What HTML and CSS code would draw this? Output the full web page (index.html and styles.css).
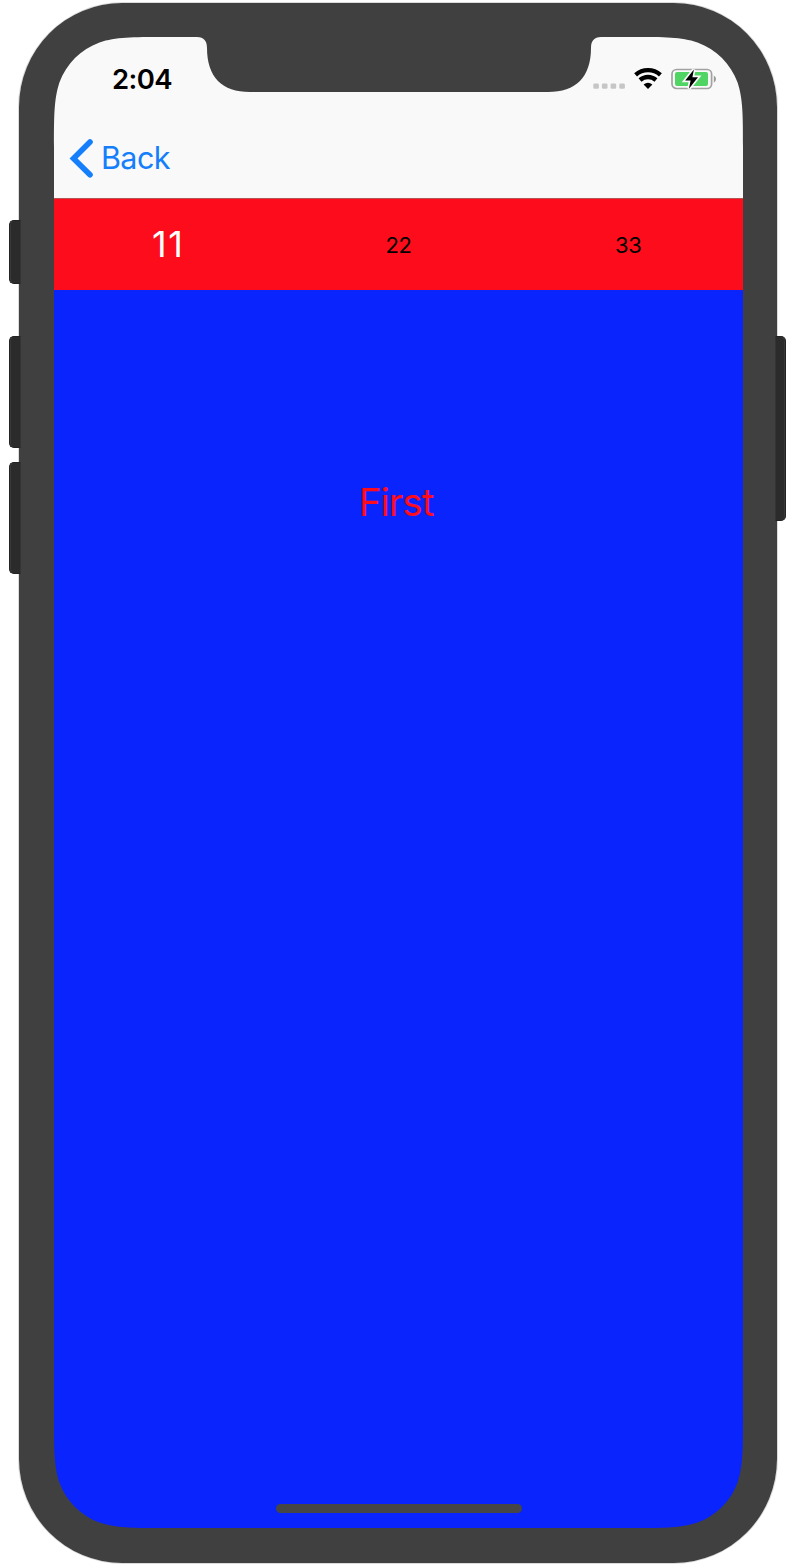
FILE: index.html
```
<!DOCTYPE html>
<html lang="en">
<head>
<meta charset="utf-8">
<title>First</title>
<link rel="stylesheet" href="styles.css">
</head>
<body>
<div class="device">
  <span class="side-button mute"></span>
  <span class="side-button volume-up"></span>
  <span class="side-button volume-down"></span>
  <span class="side-button power"></span>
  <main class="screen">
    <header class="header">
      <div class="status-bar">
        <time class="clock">2:04</time>
        <div class="indicators">
          <svg class="signal" width="32" height="6" viewBox="0 0 32 6" fill="#c6c6c6"><rect x="0.3" y="0.4" width="5.6" height="5.4" rx="1.3"/><rect x="8.9" y="0.4" width="5.6" height="5.4" rx="1.3"/><rect x="17.6" y="0.4" width="5.6" height="5.4" rx="1.3"/><rect x="26.3" y="0.4" width="5.6" height="5.4" rx="1.3"/></svg>
          <svg class="wifi" width="28" height="22" viewBox="0 0 28 22"><g fill="none" stroke="#000" stroke-width="4.4"><path d="M1.6 7.8C8.6 1.6 19.4 1.6 26.4 7.8"/><path d="M6 13C10.800 9 17.200 9 22 13"/></g><path d="M9.600 17.600q4.400-3.900 8.800 0L14 22z"/></svg>
          <svg class="battery" width="46" height="22" viewBox="0 0 46 22"><rect x="1" y="1.500" width="39.600" height="19" rx="4.500" fill="none" stroke="#a2a2a2" stroke-width="1.700"/><path d="M42.800 7.400q2.200 1.100 2.200 3.700t-2.200 3.700z" fill="#999"/><rect x="4" y="4" width="33" height="14" rx="2" fill="#50d565"/><path d="M22.900 1.600L14.200 12.500h5.400L17.900 20.700 27 9.300h-5.600z" fill="#000" stroke="#f9f9f9" stroke-width="3.400" paint-order="stroke"/></svg>
        </div>
      </div>
      <nav class="nav-bar">
        <a class="back"><svg width="24" height="40" viewBox="0 0 24 40"><path d="M21 4L4.500 20.400l16.500 16.400" fill="none" stroke="#157efb" stroke-width="5.600" stroke-linecap="round"/></svg><span class="back-label">Back</span></a>
      </nav>
    </header>
    <div class="tabs">
      <span class="tab selected">11</span>
      <span class="tab">22</span>
      <span class="tab">33</span>
    </div>
    <section class="page">
      <h1 class="page-title">First</h1>
      <span class="home-indicator"></span>
    </section>
  </main>
  <svg class="bezel" viewBox="19 3 758 1560">
    <path fill="#404040" fill-rule="evenodd" d="M122 3H674A103 104 0 0 1 777 107V1459A103 104 0 0 1 674 1563H122A103 104 0 0 1 19 1459V107A103 104 0 0 1 122 3Z
    M164 37H197C204 37 207 41 207 48C207 77 222 92 250 92H548C576 92 591 77 591 48C591 41 594 37 601 37H633C665 37 681 37 697.500 42.400C716.200 49.200 730.800 63.800 737.600 82.500C743 99.500 743 115 743 147V1418C743 1450 743 1465.500 737.600 1482.500C730.800 1501.200 716.200 1515.800 697.500 1522.600C681 1528 665 1528 633 1528H164C132 1528 116 1528 99.500 1522.600C80.800 1515.800 66.200 1501.200 59.400 1482.500C54 1465.500 54 1450 54 1418V147C54 115 54 99.500 59.400 82.500C66.200 63.800 80.800 49.200 99.500 42.400C116 37 132 37 164 37Z"/>
  </svg>
</div>
</body>
</html>
```
FILE: styles.css
```
body {
  display: flow-root;
  margin: 0;
  background: #fff;
  font-family: Inter, "Liberation Sans", sans-serif;
}

.device {
  position: relative;
  box-sizing: border-box;
  width: 758px;
  height: 1560px;
  margin: 3px 0 3px 19px;
  padding: 34px 34px 35px 35px;
  border-radius: 104px;
  box-shadow: 0 0 0 1px rgba(0, 0, 0, 0.14);
}

.bezel {
  position: absolute;
  inset: 0;
  width: 758px;
  height: 1560px;
}

/* Hardware buttons project past the case edge and lie over the bezel. */
.side-button {
  position: absolute;
  z-index: 1;
  box-sizing: border-box;
  left: -10px;
  width: 12px;
  border: 1px solid #232323;
  border-right-color: #343434;
  border-radius: 5px 0 0 5px;
  background: #2b2b2b;
  box-shadow: inset 1px 0 0 #393939;
}

.mute {
  top: 217px;
  height: 64px;
}

.volume-up {
  top: 333px;
  height: 112px;
}

.volume-down {
  top: 459px;
  height: 112px;
}

.power {
  top: 333px;
  left: auto;
  right: -9px;
  width: 11px;
  height: 185px;
  border-right-color: #232323;
  border-left-color: #343434;
  border-radius: 0 5px 5px 0;
  box-shadow: inset -1px 0 0 #393939;
}

.screen {
  display: flex;
  flex-direction: column;
  height: 1491px;
  overflow: hidden;
  border-radius: 70px;
}

.header {
  box-sizing: border-box;
  height: 162px;
  border-bottom: 1px solid #b65353;
  background: #f9f9f9;
}

.status-bar {
  display: flex;
  justify-content: space-between;
  box-sizing: border-box;
  height: 82px;
  padding: 25px 26px 0 58px;
}

.clock {
  font-size: 27.5px;
  font-weight: 600;
  line-height: 34px;
  letter-spacing: -0.6px;
}

.indicators {
  display: flex;
  height: 34px;
}

.signal {
  margin: 21px 9px 0 0;
}

.wifi {
  margin: 5px 9px 0 0;
}

.battery {
  margin-top: 6px;
}

.nav-bar {
  display: flex;
  padding-left: 15px;
}

.back {
  display: flex;
  align-items: center;
  gap: 8px;
  height: 78px;
  color: #157efb;
  font-size: 30.5px;
  letter-spacing: -0.6px;
}

.back-label {
  padding-bottom: 1px;
}

.tabs {
  display: grid;
  grid-template-columns: repeat(3, 1fr);
  align-items: center;
  height: 91px;
  background: #fd0d1b;
  font-size: 22px;
  letter-spacing: -0.3px;
  text-align: center;
}

.selected {
  padding: 0 1px 2px 0;
  color: #fff;
  font-size: 36px;
  font-weight: 400;
  letter-spacing: 1.6px;
}

.page {
  display: flex;
  flex: 1;
  flex-direction: column;
  align-items: center;
  justify-content: space-between;
  box-sizing: border-box;
  padding: 188px 0 15px;
  background: #0a24fe;
}

.page-title {
  margin: 0;
  padding-right: 5px;
  color: #fd0d1b;
  font-size: 38.5px;
  font-weight: 400;
  letter-spacing: -1px;
  line-height: 48px;
}

.home-indicator {
  width: 246px;
  height: 9px;
  border-radius: 5px;
  background: #464646;
}
```
